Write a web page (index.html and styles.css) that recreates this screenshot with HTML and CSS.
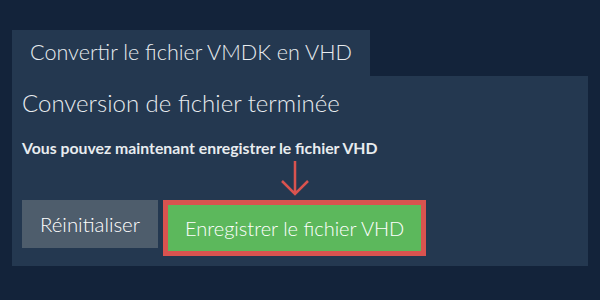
FILE: index.html
```html
<!DOCTYPE html>
<html lang="fr">
<head>
    <meta charset="UTF-8">
    <title>Convertir le fichier VMDK en VHD</title>
    <link rel="stylesheet" href="styles.css">
</head>
<body>

    <div class="tabs">
        <div class="tab">Convertir le fichier VMDK en VHD</div>
    </div>

    <div class="panel">
        <h2 class="panel-title">Conversion de fichier terminée</h2>
        <p class="panel-text">Vous pouvez maintenant enregistrer le fichier VHD</p>

        <div class="actions">
            <button class="btn btn-reset">Réinitialiser</button>
            <div class="save-wrap">
                <svg class="arrow" width="30" height="36" viewBox="0 0 30 36">
                    <path d="M15 0 V33 M2 20 L15 33 L28 20" fill="none" stroke="#d9534f" stroke-width="2.5"/>
                </svg>
                <button class="btn btn-save">Enregistrer le fichier VHD</button>
            </div>
        </div>
    </div>

</body>
</html>
```

FILE: styles.css
```css
body {
    font-family: 'Lato', sans-serif;
    font-weight: 300;
    background: #13233a;
    color: #e8ecef;
    margin: 0;
    padding: 30px 12px 0 12px;
}

.tabs {
    display: flex;
}

.tab {
    background: #243850;
    font-size: 21.6px;
    padding: 0 18px;
    height: 46px;
    line-height: 44px;
}

.panel {
    background: #243850;
    padding: 12px 10px 10px 10px;
}

.panel-title {
    font-size: 24px;
    font-weight: 300;
    margin: 0;
    line-height: 29px;
}

.panel-text {
    font-size: 15.8px;
    font-weight: bold;
    margin: 21px 0 0 0;
}

.actions {
    display: flex;
    align-items: flex-end;
    gap: 5px;
    margin-top: 4px;
}

.save-wrap {
    display: flex;
    flex-direction: column;
    align-items: center;
}

.arrow {
    display: block;
    margin-bottom: 3px;
}

.btn {
    font-family: 'Lato', sans-serif;
    font-weight: 300;
    color: #fff;
    border: none;
    border-radius: 0;
    cursor: pointer;
}

.btn-reset {
    background: #4e5d6c;
    font-size: 20.4px;
    height: 48px;
    padding: 0 18px;
    margin-bottom: 8px;
}

.btn-save {
    background: #5cb85c;
    border: 5px solid #d9534f;
    font-size: 20px;
    height: 56px;
    padding: 0 17px;
}
```
